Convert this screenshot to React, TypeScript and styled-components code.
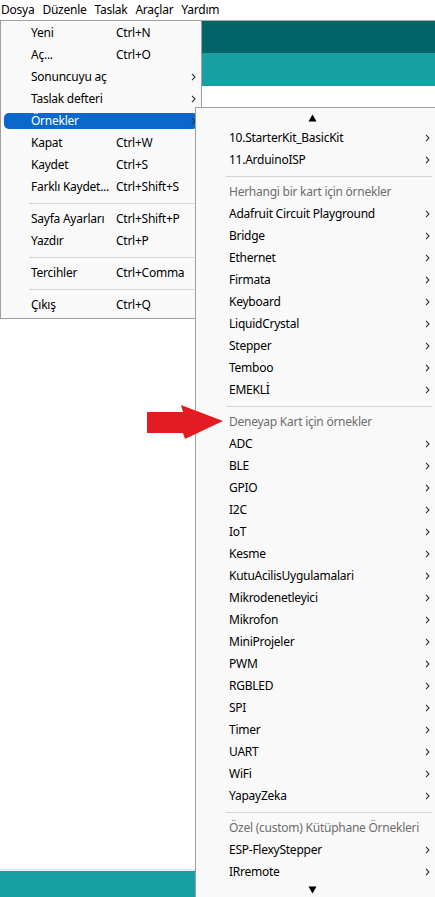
import React from "react";
import styled, { createGlobalStyle } from "styled-components";

const GlobalStyle = createGlobalStyle`
  html, body {
    margin: 0;
    padding: 0;
    background: #ffffff;
  }
  body {
    font-family: "Segoe UI", "Noto Sans", "Open Sans", sans-serif;
    font-size: 12px;
    letter-spacing: -0.25px;
    color: #000;
  }
`;

const Page = styled.div`
  position: relative;
  width: 435px;
  height: 897px;
  overflow: hidden;
  display: flex;
  flex-direction: column;
  background: #ffffff;
`;

const MenuBar = styled.div`
  height: 20px;
  display: flex;
  align-items: center;
  gap: 8px;
  padding-left: 1px;
  border-bottom: 1px solid #a9b3b4;
  background: #ffffff;
`;

const MenuBarItem = styled.span`
  font-size: 12px;
  line-height: 20px;
  color: #000;
`;

const Band = styled.div<{ $tone: "dark" | "light" }>`
  height: ${(p) => (p.$tone === "dark" ? "32px" : "33px")};
  background: ${(p) => (p.$tone === "dark" ? "#006468" : "#17a1a5")};
`;

const Editor = styled.div`
  flex: 1;
  background: #ffffff;
`;

const StatusDivider = styled.div`
  height: 2px;
  background: #e3eeee;
`;

const StatusBar = styled.div`
  height: 26px;
  background: #17a1a5;
`;

const FileMenu = styled.div`
  position: absolute;
  top: 20px;
  left: 0;
  width: 200px;
  border: 1px solid #a0a0a0;
  background: #f9f9f9;
  padding: 1px 0 2px;
  box-sizing: content-box;
`;

const Item = styled.div<{ $active?: boolean }>`
  position: relative;
  height: 22px;
  display: flex;
  align-items: center;
  margin: 0 3px;
  padding: 0 2px 0 27px;
  color: ${(p) => (p.$active ? "#ffffff" : "#000000")};
  &::before {
    content: "";
    position: absolute;
    left: 0;
    right: 0;
    top: 3px;
    bottom: 3px;
    border-radius: 5px;
    background: ${(p) => (p.$active ? "#0a68cc" : "transparent")};
    z-index: 0;
  }
`;

const Label = styled.span`
  position: relative;
  width: 85px;
  white-space: nowrap;
  line-height: 22px;
`;

const Shortcut = styled.span`
  position: relative;
  flex: 1;
  white-space: nowrap;
  line-height: 22px;
`;

const ChevronBox = styled.span<{ $light?: boolean }>`
  position: relative;
  display: flex;
  width: 5px;
  height: 8px;
  color: ${(p) => (p.$light ? "#1a3c66" : "#333333")};
`;

const Separator = styled.div<{ $left: number; $right: number }>`
  height: 10px;
  display: flex;
  align-items: center;
  padding-left: ${(p) => p.$left}px;
  padding-right: ${(p) => p.$right}px;
  &::after {
    content: "";
    flex: 1;
    height: 1px;
    background: #d4d4d4;
  }
`;

const SubMenu = styled.div`
  position: absolute;
  top: 107px;
  left: 195px;
  right: 0;
  bottom: 0;
  border-left: 1px solid #a0a0a0;
  border-top: 1px solid #a0a0a0;
  background: #f9f9f9;
  display: flex;
  flex-direction: column;
`;

const ScrollArrow = styled.div<{ $h: number }>`
  height: ${(p) => p.$h}px;
  display: flex;
  align-items: center;
  justify-content: center;
  padding-right: 7px;
`;

const SubItem = styled.div<{ $header?: boolean }>`
  height: 22px;
  display: flex;
  align-items: center;
  padding: 0 5px 0 33px;
  color: ${(p) => (p.$header ? "#6d6d6d" : "#000000")};
`;

const SubLabel = styled.span`
  flex: 1;
  white-space: nowrap;
  line-height: 22px;
`;

const PointerArrow = styled.svg`
  position: absolute;
  left: 146px;
  top: 403px;
  width: 80px;
  height: 40px;
`;

const Chevron: React.FC<{ light?: boolean }> = ({ light }) => (
  <ChevronBox $light={light}>
    <svg width="5" height="8" viewBox="0 0 5 8">
      <polyline points="1,0.8 4,4 1,7.2" fill="none" stroke="currentColor" strokeWidth="1.1" />
    </svg>
  </ChevronBox>
);

const Triangle: React.FC<{ up?: boolean }> = ({ up }) => (
  <svg width="9" height="8" viewBox="0 0 9 8">
    {up ? <polygon points="4.5,0.5 8.5,7.5 0.5,7.5" fill="#000" /> : <polygon points="0.5,0.5 8.5,0.5 4.5,7.5" fill="#000" />}
  </svg>
);

type FileEntry =
  | { kind: "item"; label: string; shortcut?: string; sub?: boolean; active?: boolean }
  | { kind: "sep" };

const fileEntries: FileEntry[] = [
  { kind: "item", label: "Yeni", shortcut: "Ctrl+N" },
  { kind: "item", label: "Aç...", shortcut: "Ctrl+O" },
  { kind: "item", label: "Sonuncuyu aç", sub: true },
  { kind: "item", label: "Taslak defteri", sub: true },
  { kind: "item", label: "Örnekler", sub: true, active: true },
  { kind: "item", label: "Kapat", shortcut: "Ctrl+W" },
  { kind: "item", label: "Kaydet", shortcut: "Ctrl+S" },
  { kind: "item", label: "Farklı Kaydet...", shortcut: "Ctrl+Shift+S" },
  { kind: "sep" },
  { kind: "item", label: "Sayfa Ayarları", shortcut: "Ctrl+Shift+P" },
  { kind: "item", label: "Yazdır", shortcut: "Ctrl+P" },
  { kind: "sep" },
  { kind: "item", label: "Tercihler", shortcut: "Ctrl+Comma" },
  { kind: "sep" },
  { kind: "item", label: "Çıkış", shortcut: "Ctrl+Q" },
];

type SubEntry = { kind: "item"; label: string } | { kind: "header"; label: string } | { kind: "sep" };

const subEntries: SubEntry[] = [
  { kind: "item", label: "10.StarterKit_BasicKit" },
  { kind: "item", label: "11.ArduinoISP" },
  { kind: "sep" },
  { kind: "header", label: "Herhangi bir kart için örnekler" },
  ...["Adafruit Circuit Playground", "Bridge", "Ethernet", "Firmata", "Keyboard", "LiquidCrystal", "Stepper", "Temboo", "EMEKLİ"].map(
    (l) => ({ kind: "item", label: l } as SubEntry)
  ),
  { kind: "sep" },
  { kind: "header", label: "Deneyap Kart için örnekler" },
  ...[
    "ADC",
    "BLE",
    "GPIO",
    "I2C",
    "IoT",
    "Kesme",
    "KutuAcilisUygulamalari",
    "Mikrodenetleyici",
    "Mikrofon",
    "MiniProjeler",
    "PWM",
    "RGBLED",
    "SPI",
    "Timer",
    "UART",
    "WiFi",
    "YapayZeka",
  ].map((l) => ({ kind: "item", label: l } as SubEntry)),
  { kind: "sep" },
  { kind: "header", label: "Özel (custom) Kütüphane Örnekleri" },
  { kind: "item", label: "ESP-FlexyStepper" },
  { kind: "item", label: "IRremote" },
];

export default function App() {
  return (
    <Page>
      <GlobalStyle />
      <MenuBar>
        {["Dosya", "Düzenle", "Taslak", "Araçlar", "Yardım"].map((m) => (
          <MenuBarItem key={m}>{m}</MenuBarItem>
        ))}
      </MenuBar>
      <Band $tone="dark" />
      <Band $tone="light" />
      <Editor />
      <StatusDivider />
      <StatusBar />

      <FileMenu>
        {fileEntries.map((e, i) =>
          e.kind === "sep" ? (
            <Separator key={i} $left={28} $right={7} />
          ) : (
            <Item key={i} $active={e.active}>
              <Label>{e.label}</Label>
              <Shortcut>{e.shortcut ?? ""}</Shortcut>
              {e.sub && <Chevron light={e.active} />}
            </Item>
          )
        )}
      </FileMenu>

      <SubMenu>
        <ScrollArrow $h={19}>
          <Triangle up />
        </ScrollArrow>
        {subEntries.map((e, i) =>
          e.kind === "sep" ? (
            <Separator key={i} $left={30} $right={3} />
          ) : e.kind === "header" ? (
            <SubItem key={i} $header>
              <SubLabel>{e.label}</SubLabel>
            </SubItem>
          ) : (
            <SubItem key={i}>
              <SubLabel>{e.label}</SubLabel>
              <Chevron />
            </SubItem>
          )
        )}
        <ScrollArrow $h={14}>
          <Triangle />
        </ScrollArrow>
      </SubMenu>

      <PointerArrow viewBox="0 0 80 40">
        <polygon points="1,9 37,9 35,2 77,18 39,36 37,30 1,30" fill="#e31b23" />
      </PointerArrow>
    </Page>
  );
}
